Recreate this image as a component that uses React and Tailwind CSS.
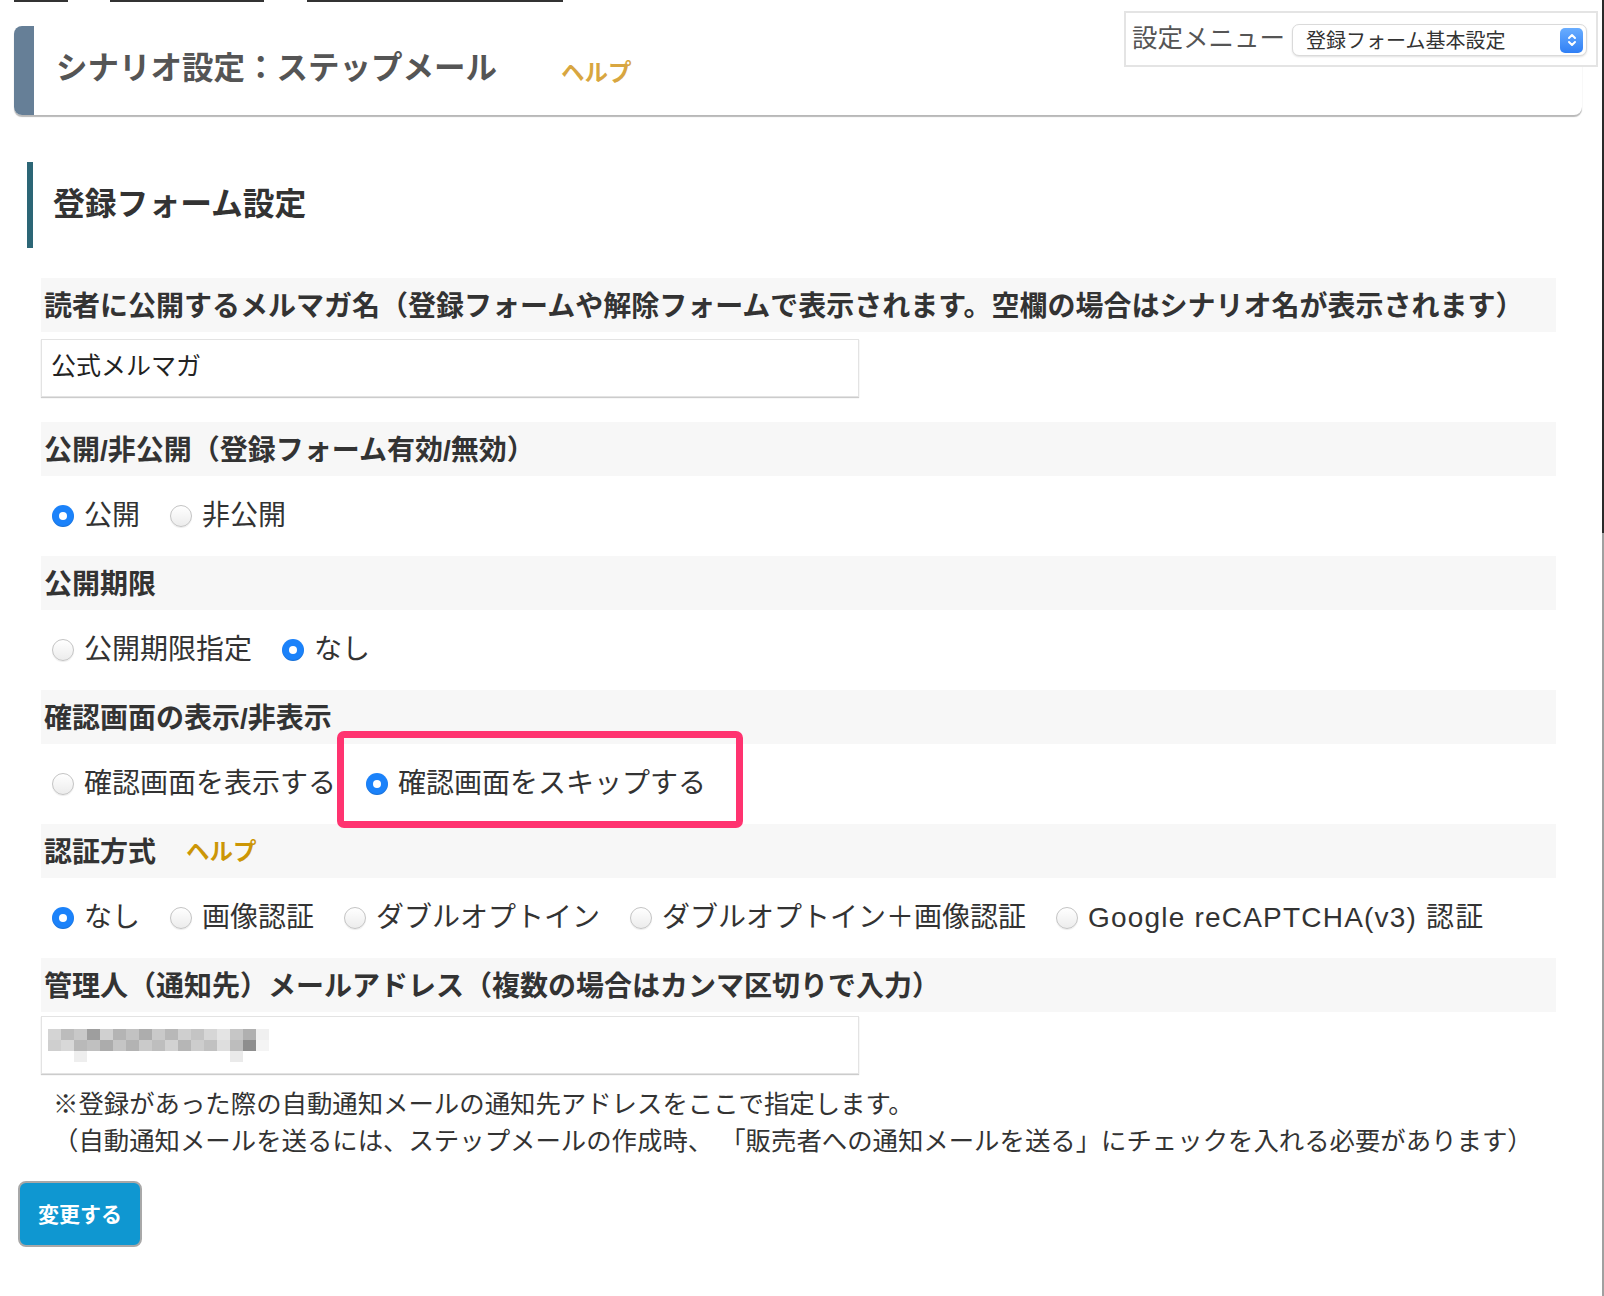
import React from "react";

const FONT = { fontFamily: '"Liberation Sans","Noto Sans CJK JP",sans-serif' };

function Radio({ checked }) {
  if (checked) {
    return (
      <span className="w-[22px] h-[22px] rounded-full bg-[#1b82fa] flex items-center justify-center shrink-0 shadow-[inset_0_-1px_1px_rgba(0,0,0,0.15)]">
        <span className="w-[8px] h-[8px] rounded-full bg-white" />
      </span>
    );
  }
  return (
    <span className="w-[22px] h-[22px] rounded-full border border-[#c4c4c4] bg-gradient-to-b from-white to-[#ececec] shrink-0 shadow-[0_1px_1px_rgba(0,0,0,0.08)]" />
  );
}

function Option({ checked, label, wide }) {
  return (
    <span className="flex items-center">
      <Radio checked={checked} />
      <span className={`ml-[10px] text-[28px] text-[#333] leading-none ${wide ? "tracking-[1.2px]" : ""}`}>{label}</span>
    </span>
  );
}

function Label({ children, mt }) {
  return (
    <div className={`h-[54px] bg-[#f7f7f7] pl-[3px] pt-[4px] flex items-center gap-[30px] ${mt || ""}`}>
      <span className="text-[28px] font-bold text-[#333] leading-none whitespace-nowrap">{children}</span>
    </div>
  );
}

function Row({ children }) {
  return <div className="h-[80px] pl-[11px] flex items-center gap-[30px]">{children}</div>;
}

const mosaic = [
  ["bg-[#d4d4d4]", "bg-[#bcbcbc]", "bg-[#c8c8c8]", "bg-[#9e9e9e]", "bg-[#d0d0d0]", "bg-[#b4b4b4]", "bg-[#c2c2c2]", "bg-[#adadad]", "bg-[#c9c9c9]", "bg-[#b8b8b8]", "bg-[#cfcfcf]", "bg-[#c4c4c4]", "bg-[#d6d6d6]", "bg-[#e4e4e4]", "bg-[#c6c6c6]", "bg-[#b0b0b0]", "bg-[#f0f0f0]"],
  ["bg-[#cfcfcf]", "bg-[#d8d8d8]", "bg-[#b9b9b9]", "bg-[#c0c0c0]", "bg-[#acacac]", "bg-[#c5c5c5]", "bg-[#b3b3b3]", "bg-[#cacaca]", "bg-[#bebebe]", "bg-[#d2d2d2]", "bg-[#b6b6b6]", "bg-[#cdcdcd]", "bg-[#c1c1c1]", "bg-[#dedede]", "bg-[#bdbdbd]", "bg-[#8e8e8e]", "bg-[#f4f4f4]"],
  ["bg-white", "bg-white", "bg-[#eeeeee]", "bg-white", "bg-white", "bg-white", "bg-white", "bg-white", "bg-white", "bg-white", "bg-white", "bg-white", "bg-white", "bg-white", "bg-[#eaeaea]", "bg-white", "bg-white"],
];

export default function App() {
  return (
    <div className="relative flex min-h-[1296px] bg-white" style={FONT}>
      <div className="flex-1 flex flex-col">
        {/* top tab underlines */}
        <div className="flex h-[2px]">
          <div className="ml-[14px] w-[54px] bg-[#333]" />
          <div className="ml-[42px] w-[154px] bg-[#333]" />
          <div className="ml-[43px] w-[256px] bg-[#333]" />
        </div>

        {/* header panel */}
        <div className="ml-[14px] mt-[24px] w-[1568px] h-[89px] flex rounded-[8px] bg-white shadow-[0_2px_1px_rgba(0,0,0,0.28)]">
          <div className="w-[20px] bg-[#667f97] rounded-l-[8px]" />
          <div className="flex items-baseline pl-[22px] pt-[27px]">
            <span className="text-[31.5px] font-bold text-[#555] leading-none">シナリオ設定：ステップメール</span>
            <span className="ml-[64px] text-[23.5px] font-bold text-[#d8a640] leading-none translate-y-[2px]">ヘルプ</span>
          </div>
        </div>

        {/* section heading */}
        <div className="ml-[27px] mt-[47px] h-[86px] flex items-center">
          <div className="w-[6px] h-full bg-[#2c6676]" />
          <span className="ml-[20px] text-[31.8px] font-bold text-[#333] leading-none">登録フォーム設定</span>
        </div>

        {/* fields */}
        <div className="ml-[41px] w-[1515px] mt-[30px] flex flex-col">
          <Label>読者に公開するメルマガ名（登録フォームや解除フォームで表示されます。空欄の場合はシナリオ名が表示されます）</Label>
          <div className="mt-[7px] w-[818px] h-[58px] border border-[#e3e3e3] shadow-[0_1px_1px_rgba(0,0,0,0.2)] flex items-center pl-[9px] pb-[3px]">
            <span className="text-[25px] text-[#222] leading-none">公式メルマガ</span>
          </div>

          <Label mt="mt-[25px]">公開/非公開（登録フォーム有効/無効）</Label>
          <Row>
            <Option checked label="公開" />
            <Option label="非公開" />
          </Row>

          <Label>公開期限</Label>
          <Row>
            <Option label="公開期限指定" />
            <Option checked label="なし" />
          </Row>

          <Label>確認画面の表示/非表示</Label>
          <Row>
            <Option label="確認画面を表示する" />
            <span className="relative flex items-center">
              <Option checked label="確認画面をスキップする" />
              <span className="absolute left-[-29px] top-[-39px] w-[406px] h-[97px] border-[7px] border-[#ff3370] rounded-[7px] pointer-events-none" />
            </span>
          </Row>

          <div className="h-[54px] bg-[#f7f7f7] pl-[3px] pt-[4px] flex items-center">
            <span className="text-[28px] font-bold text-[#333] leading-none">認証方式</span>
            <span className="ml-[30px] text-[23.5px] font-bold text-[#cc9606] leading-none">ヘルプ</span>
          </div>
          <Row>
            <Option checked label="なし" />
            <Option label="画像認証" />
            <Option label="ダブルオプトイン" />
            <Option label="ダブルオプトイン＋画像認証" />
            <Option wide label="Google reCAPTCHA(v3) 認証" />
          </Row>

          <Label>管理人（通知先）メールアドレス（複数の場合はカンマ区切りで入力）</Label>
          <div className="mt-[4px] w-[818px] h-[58px] border border-[#e3e3e3] shadow-[0_1px_1px_rgba(0,0,0,0.2)] flex items-center pl-[6px]">
            <div className="flex flex-col">
              {mosaic.map((row, i) => (
                <div key={i} className="flex">
                  {row.map((c, j) => (
                    <div key={j} className={`w-[13px] h-[11px] ${c}`} />
                  ))}
                </div>
              ))}
            </div>
          </div>

          <div className="mt-[12px] pl-[12px] text-[25.4px] leading-[37px] text-[#333]">
            <div>※登録があった際の自動通知メールの通知先アドレスをここで指定します。</div>
            <div>（自動通知メールを送るには、ステップメールの作成時、 「販売者への通知メールを送る」にチェックを入れる必要があります）</div>
          </div>
        </div>

        <button className="ml-[18px] mt-[21px] w-[124px] h-[66px] bg-[#0f97d1] border-2 border-[#a8a8a8] rounded-[8px] flex items-center justify-center">
          <span className="text-[21px] font-bold text-white leading-none">変更する</span>
        </button>
      </div>

      {/* right edge strip */}
      <div className="w-[2px] flex flex-col">
        <div className="h-[533px] bg-[#2a2a2a]" />
        <div className="flex-1 bg-[#a0a0a0]" />
      </div>

      {/* settings menu box (floats over header) */}
      <div className="absolute left-[1124px] top-[11px] w-[474px] h-[56px] border-2 border-[#e4e4e4] bg-white flex items-center">
        <span className="ml-[6px] text-[25.5px] text-[#555] leading-none">設定メニュー</span>
        <div className="ml-[7px] mt-[2px] w-[295px] h-[32px] rounded-[7px] border border-[#dadada] bg-white shadow-[0_1px_2px_rgba(0,0,0,0.12)] flex items-center justify-between pl-[13px] pr-[3px]">
          <span className="text-[20px] text-[#333] leading-none pt-[2px]">登録フォーム基本設定</span>
          <span className="w-[23px] h-[25px] rounded-[5px] bg-gradient-to-b from-[#69adff] to-[#2f7ff5] flex items-center justify-center">
            <svg width="10" height="16" viewBox="0 0 10 16" fill="none" stroke="white" strokeWidth="2" strokeLinecap="round" strokeLinejoin="round">
              <path d="M2 6 L5 3 L8 6" />
              <path d="M2 10 L5 13 L8 10" />
            </svg>
          </span>
        </div>
      </div>
    </div>
  );
}
